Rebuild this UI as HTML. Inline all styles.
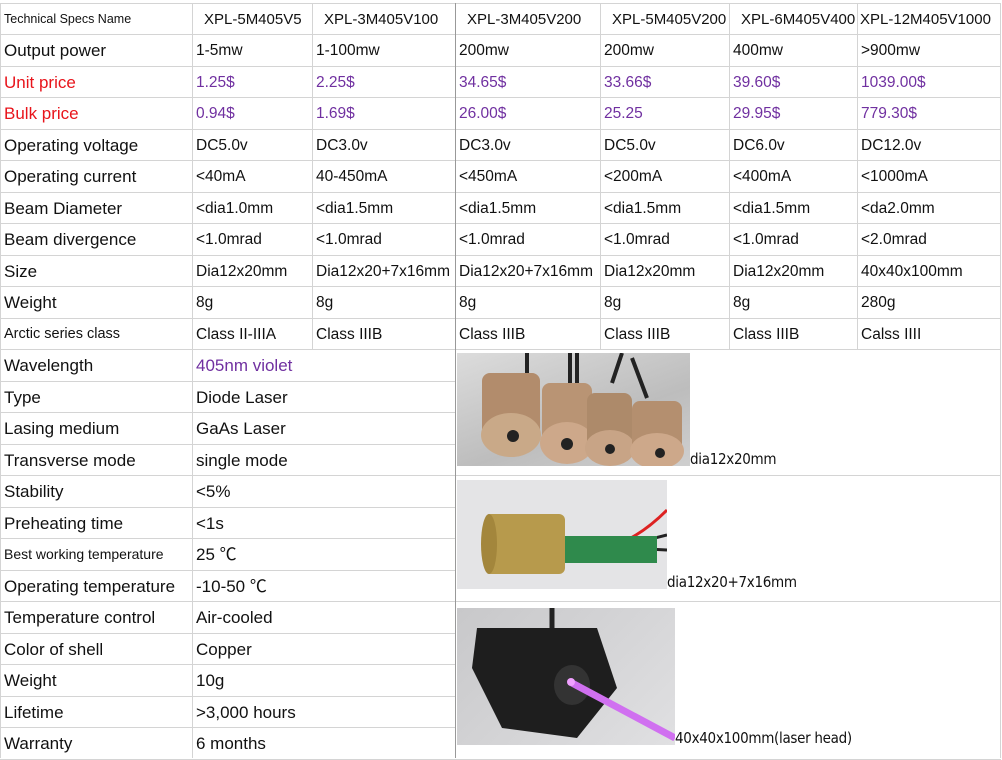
<!DOCTYPE html>
<html><head><meta charset="utf-8"><style>
body{margin:0;width:1002px;height:758px;background:#fff;position:relative;overflow:hidden;font-family:"Liberation Sans","Noto Sans CJK SC",sans-serif;color:#111}
.h{position:absolute;height:1px;background:#d4d4d4}
.v{position:absolute;width:1px;background:#d4d4d4}
.t{position:absolute;white-space:nowrap;font-size:17px;line-height:31px}
.p{color:#7030a0}.r{color:#e8141b}
.img{position:absolute;overflow:hidden}
.lab{position:absolute;font-size:15px;white-space:nowrap;font-family:"DejaVu Sans Condensed","Liberation Sans",sans-serif;letter-spacing:-0.3px}
</style></head><body>
<div id="g"></div>
<div class="img" style="left:457px;top:353px;width:233px;height:113px;background:linear-gradient(160deg,#dcdcdc,#bdbdbd 60%,#cfcfcf)">
<svg width="233" height="113">
<g stroke="#222" stroke-width="4" fill="none"><path d="M70 0v30M113 0v35M120 0v35M165 0l-10 30M175 5l15 40"/></g>
<g>
<rect x="25" y="20" width="58" height="65" rx="8" fill="#b28c6c"/><ellipse cx="54" cy="82" rx="30" ry="22" fill="#c9a988"/><circle cx="56" cy="83" r="6" fill="#222"/>
<rect x="85" y="30" width="50" height="65" rx="8" fill="#b99474"/><ellipse cx="110" cy="90" rx="27" ry="21" fill="#cda88a"/><circle cx="110" cy="91" r="6" fill="#222"/>
<rect x="130" y="40" width="45" height="60" rx="8" fill="#ad8a6a"/><ellipse cx="153" cy="95" rx="25" ry="18" fill="#c8a486"/><circle cx="153" cy="96" r="5" fill="#222"/>
<rect x="175" y="48" width="50" height="55" rx="8" fill="#b48f6f"/><ellipse cx="200" cy="98" rx="27" ry="18" fill="#cda88a"/><circle cx="203" cy="100" r="5" fill="#222"/>
</g></svg></div>
<div class="lab" style="left:690px;top:450px">dia12x20mm</div>
<div class="img" style="left:457px;top:480px;width:210px;height:109px;background:#e4e4e6">
<svg width="210" height="109"><path d="M170 60q20-10 40-30" stroke="#d22" stroke-width="3" fill="none"/><path d="M170 65l40-10M170 68l40 2" stroke="#222" stroke-width="3"/>
<rect x="108" y="56" width="92" height="27" fill="#2f8a4c"/><rect x="28" y="34" width="80" height="60" rx="6" fill="#b79a4c"/><ellipse cx="32" cy="64" rx="8" ry="30" fill="#a3863c"/></svg></div>
<div class="lab" style="left:667px;top:573px">dia12x20+7x16mm</div>
<div class="img" style="left:457px;top:608px;width:218px;height:137px;background:linear-gradient(135deg,#c8c8ca,#e0e0e2)">
<svg width="218" height="137"><path d="M95 0v20" stroke="#222" stroke-width="5"/><polygon points="20,20 140,20 160,80 120,130 45,120 15,60" fill="#1e1e1e"/><ellipse cx="115" cy="77" rx="18" ry="20" fill="#333"/><path d="M115 75L218 130" stroke="#d070f0" stroke-width="7"/><circle cx="114" cy="74" r="4" fill="#f0a0ff"/></svg></div>
<div class="lab" style="left:675px;top:729px">40x40x100mm(laser head)</div>
<script>
var cols=[0,192,312,455,600,729,857,1000];
var rows=[
["Technical Specs Name","XPL-5M405V5","XPL-3M405V100","XPL-3M405V200","XPL-5M405V200","XPL-6M405V400","XPL-12M405V1000"],
["Output power","1-5mw","1-100mw","200mw","200mw","400mw",">900mw"],
["Unit price","1.25$","2.25$","34.65$","33.66$","39.60$","1039.00$"],
["Bulk price","0.94$","1.69$","26.00$","25.25","29.95$","779.30$"],
["Operating voltage","DC5.0v","DC3.0v","DC3.0v","DC5.0v","DC6.0v","DC12.0v"],
["Operating current","<40mA","40-450mA","<450mA","<200mA","<400mA","<1000mA"],
["Beam Diameter","<dia1.0mm","<dia1.5mm","<dia1.5mm","<dia1.5mm","<dia1.5mm","<da2.0mm"],
["Beam divergence","<1.0mrad","<1.0mrad","<1.0mrad","<1.0mrad","<1.0mrad","<2.0mrad"],
["Size","Dia12x20mm","Dia12x20+7x16mm","Dia12x20+7x16mm","Dia12x20mm","Dia12x20mm","40x40x100mm"],
["Weight","8g","8g","8g","8g","8g","280g"],
["Arctic series class","Class II-IIIA","Class IIIB","Class IIIB","Class IIIB","Class IIIB","Calss IIII"],
["Wavelength","405nm violet"],["Type","Diode Laser"],["Lasing medium","GaAs Laser"],["Transverse mode","single mode"],
["Stability","<5%"],["Preheating time","<1s"],["Best working temperature","25 ℃"],["Operating temperature","-10-50 ℃"],
["Temperature control","Air-cooled"],["Color of shell","Copper"],["Weight","10g"],["Lifetime",">3,000 hours"],["Warranty","6 months"]];
var h='';
function y(i){return i==0?3:34+(i-1)*31.5;}
for(var i=0;i<=24;i++){var yy=Math.round(y(i));var full=(i<=11||i==15||i==19||i==24);
 h+='<div class="h" style="top:'+yy+'px;left:0;width:'+(full?1001:456)+'px"></div>';}
for(var c=0;c<cols.length;c++){var bot=(c==0||c==1||c==3||c==7)?758:349;
 h+='<div class="v" style="left:'+cols[c]+'px;top:3px;height:'+(bot-3)+'px;'+(c==3?'background:#999':'')+'"></div>';}
for(var i=0;i<rows.length;i++){var r=rows[i];
 for(var c=0;c<r.length;c++){
  var cls='t',st='left:'+(cols[c]+4)+'px;top:'+(Math.round(y(i))+1)+'px;';
  if(i==0){st+=c==0?'font-size:12.5px;':'font-size:15px;'; if(c>0)st+='left:'+(cols[c]+(c==6?3:12))+'px;';}
  if((i==2||i==3)&&c==0)cls+=' r';
  if((i==2||i==3)&&c>0)cls+=' p';
  if(i==11&&c==1)cls+=' p';
  if(i>0&&c>0&&i<=10)st+='font-size:15.5px;';
  if(i==10&&c==0)st+='font-size:14.5px;';
  if(i==17&&c==0)st+='font-size:14px;';
  h+='<div class="'+cls+'" style="'+st+'">'+r[c].replace(/</g,'&lt;')+'</div>';}}
document.getElementById('g').innerHTML=h;
</script>
</body></html>
